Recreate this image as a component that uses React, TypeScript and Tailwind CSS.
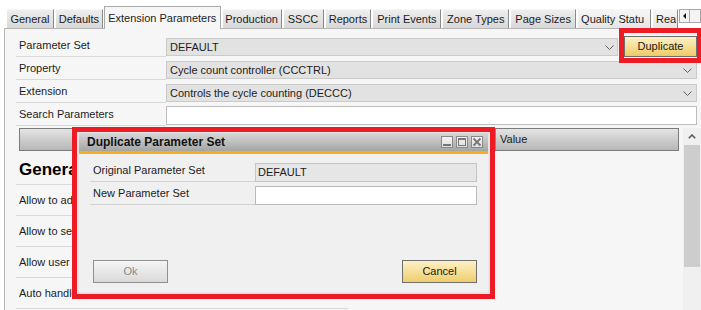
import React from 'react';

interface Tab {
    label: string;
    width: string;
    active?: boolean;
    clipped?: boolean;
}

const tabs: Tab[] = [
    { label: 'General', width: 'w-[48px]' },
    { label: 'Defaults', width: 'w-[48px]' },
    { label: 'Extension Parameters', width: 'w-[117px]', active: true },
    { label: 'Production', width: 'w-[60px]' },
    { label: 'SSCC', width: 'w-[41px]' },
    { label: 'Reports', width: 'w-[47px]' },
    { label: 'Print Events', width: 'w-[69px]' },
    { label: 'Zone Types', width: 'w-[67px]' },
    { label: 'Page Sizes', width: 'w-[66px]' },
    { label: 'Quality Statu', width: 'w-[74px]', clipped: true },
    { label: 'Rea', width: 'w-[26px]', clipped: true },
];

// only the start of each row shows beside the dialog
const generalRows = ['Allow to adjust', 'Allow to select', 'Allow user to', 'Auto handle'];

function Chevron() {
    return (
        <svg width="9" height="5" viewBox="0 0 9 5" className="shrink-0">
            <polyline points="0.5,0.5 4.5,4.5 8.5,0.5" fill="none" stroke="#5f5f5f" strokeWidth="1" />
        </svg>
    );
}

function FormRow({ label, children }: { label: string; children: React.ReactNode }) {
    return (
        <div className="flex h-[23px]">
            <div className="w-[150px] flex items-center pl-[3px] border-b border-[#d9d9d9]">{label}</div>
            <div className="flex-1 flex items-end pb-[1px]">{children}</div>
        </div>
    );
}

function SelectBox({ value, pad }: { value: string; pad: string }) {
    return (
        <div className={`flex-1 h-[18px] bg-[#e2e2e2] border border-[#cacaca] flex items-center justify-between pl-[3px] ${pad}`}>
            <span className="whitespace-nowrap">{value}</span>
            <Chevron />
        </div>
    );
}

function TitleButton({ kind }: { kind: 'min' | 'max' | 'close' }) {
    return (
        <div className="w-[12px] h-[12px] border border-[#8a8a8a] bg-linear-to-b from-[#f4f4f4] to-[#dedede] flex items-center justify-center">
            <svg width="10" height="10" viewBox="0 0 10 10">
                {kind === 'min' && <rect x="1" y="7" width="8" height="2" fill="#767676" />}
                {kind === 'max' && (
                    <>
                        <rect x="1.5" y="1.5" width="7" height="7" fill="none" stroke="#767676" strokeWidth="1" />
                        <rect x="1" y="1" width="8" height="2" fill="#767676" />
                    </>
                )}
                {kind === 'close' && (
                    <path d="M1.5 1.5 L8.5 8.5 M8.5 1.5 L1.5 8.5" stroke="#767676" strokeWidth="1.8" />
                )}
            </svg>
        </div>
    );
}

function DuplicateDialog() {
    return (
        <div className="absolute left-[72px] top-[127px] w-[423px] h-[172px] border-[5px] border-[#ed1c24]">
            <div className="h-full flex flex-col bg-[#e6e6e6] px-[2px] pb-[2px] pt-[1px]">
                <div className="h-[18px] flex items-center justify-between bg-linear-to-b from-[#d8d8d8] to-[#a5a5a5] pl-[8px] pr-[5px]">
                    <span className="text-[12px] font-bold text-[#111111]">Duplicate Parameter Set</span>
                    <div className="flex gap-[3px]">
                        <TitleButton kind="min" />
                        <TitleButton kind="max" />
                        <TitleButton kind="close" />
                    </div>
                </div>
                <div className="h-[3px] bg-[#f4b01c]" />
                <div className="flex-1 bg-[#f0f0f0] flex flex-col pt-[5px] pl-[11px] pr-[11px] pb-[9px]">
                    <div className="flex h-[23px]">
                        <div className="w-[165px] flex items-center pl-[3px] border-b border-[#d2d2d2]">Original Parameter Set</div>
                        <div className="flex-1 flex items-end">
                            <div className="flex-1 h-[19px] bg-[#e6e6e6] border border-[#c4c4c4] flex items-center pl-[2px]">DEFAULT</div>
                        </div>
                    </div>
                    <div className="flex h-[23px]">
                        <div className="w-[165px] flex items-center pl-[3px] border-b border-[#d2d2d2]">New Parameter Set</div>
                        <div className="flex-1 flex items-end">
                            <div className="flex-1 h-[19px] bg-white border border-[#b9b9b9]" />
                        </div>
                    </div>
                    <div className="mt-auto flex justify-between pl-[3px]">
                        <button className="w-[75px] h-[23px] border border-[#909090] bg-linear-to-b from-[#f5f5f5] to-[#dadada] text-[#8a8a8a]">
                            Ok
                        </button>
                        <button className="w-[75px] h-[23px] border border-[#707070] bg-linear-to-b from-[#fdf1c6] to-[#efcd68] text-[#1a1a1a]">
                            Cancel
                        </button>
                    </div>
                </div>
            </div>
        </div>
    );
}

export default function App() {
    return (
        <div className="relative w-[701px] h-[310px] overflow-hidden bg-white font-['Liberation_Sans',Arial,sans-serif] text-[11px] text-[#1c1c1c]">
            {/* tab strip */}
            <div className="h-[28px] flex items-end gap-[1px] pl-[6px]">
                {tabs.map((tab) =>
                    tab.active ? (
                        <div
                            key={tab.label}
                            className={`${tab.width} relative z-10 h-[23px] -mb-[1px] flex items-center justify-center whitespace-nowrap border-l border-t border-r border-[#a9a9a9] bg-[#f6f6f6]`}
                        >
                            {tab.label}
                        </div>
                    ) : (
                        <div
                            key={tab.label}
                            className={`${tab.width} h-[19px] flex items-center whitespace-nowrap overflow-hidden border-t border-t-[#f6f6f6] border-l border-l-white border-r border-r-[#8a8a8a] ${
                                tab.clipped
                                    ? 'justify-start pl-[3px] bg-linear-to-b from-[#f6f6f6] to-[#e6e6e6]'
                                    : 'justify-center bg-linear-to-b from-[#eeeeee] to-[#d8d8d8]'
                            }`}
                        >
                            {tab.label}
                        </div>
                    )
                )}
                <div className="self-start mt-[9px] flex">
                    <div className="w-[11px] h-[14px] border border-[#a9a9a9] bg-[#f4f4f4] flex items-center justify-center">
                        <svg width="3" height="6" viewBox="0 0 3 6">
                            <polygon points="3,0 0,3 3,6" fill="#111111" />
                        </svg>
                    </div>
                    <div className="w-[11px] h-[14px] border border-l-0 border-[#a9a9a9] bg-[#f4f4f4]" />
                </div>
            </div>

            {/* tab page */}
            <div className="ml-[4px] h-[282px] border-l border-t border-[#b5b5b5] bg-[#f6f6f6] pt-[5px] pl-[11px] flex flex-col">
                <div className="flex flex-col pr-[4px]">
                    <FormRow label="Parameter Set">
                        <div className="flex-1 flex items-end gap-[6px]">
                            <SelectBox value="DEFAULT" pad="pr-[3px]" />
                            <button className="w-[73px] h-[21px] -mb-[1px] border border-[#6e6e6e] bg-linear-to-b from-[#fdf1c6] to-[#efcb62] text-[#1a1a1a]">
                                Duplicate
                            </button>
                        </div>
                    </FormRow>
                    <FormRow label="Property">
                        <SelectBox value="Cycle count controller (CCCTRL)" pad="pr-[4px]" />
                    </FormRow>
                    <FormRow label="Extension">
                        <SelectBox value="Controls the cycle counting (DECCC)" pad="pr-[4px]" />
                    </FormRow>
                    <FormRow label="Search Parameters">
                        <div className="flex-1 h-[19px] bg-white border border-[#bdbdbd]" />
                    </FormRow>
                </div>

                <div className="mt-[2px] flex flex-1 gap-[4px] min-h-0">
                    <div className="flex-1 flex flex-col">
                        <div className="ml-[3px] h-[23px] flex border border-[#7b7b7b] bg-linear-to-b from-[#e4e4e4] to-[#b7b7b7]">
                            <div className="w-[476px] border-r border-[#8a8a8a]" />
                            <div className="flex-1 flex items-center pl-[4px]">Value</div>
                        </div>
                        <div className="w-[332px] h-[34px] pt-[5px] flex items-center pl-[3px] border-b border-[#d9d9d9] text-[17px] font-bold text-black">
                            General
                        </div>
                        {generalRows.map((row) => (
                            <div key={row} className="w-[332px] h-[31px] shrink-0 flex items-center pl-[3px] border-b border-[#d9d9d9] whitespace-nowrap">
                                {row}
                            </div>
                        ))}
                    </div>

                    {/* vertical scrollbar */}
                    <div className="w-[18px] h-full bg-[#f0f0f0] flex flex-col items-center">
                        <div className="h-[17px] flex items-center justify-center">
                            <svg width="8" height="5" viewBox="0 0 8 5">
                                <polyline points="0.8,4.2 4,1 7.2,4.2" fill="none" stroke="#5a5a5a" strokeWidth="1.6" />
                            </svg>
                        </div>
                        <div className="w-[16px] h-[122px] bg-[#cdcdcd]" />
                    </div>
                </div>
            </div>

            {/* overlays */}
            <div className="absolute left-[619px] top-[28px] w-[83px] h-[35px] border-[5px] border-[#ed1c24]" />
            <DuplicateDialog />
        </div>
    );
}
